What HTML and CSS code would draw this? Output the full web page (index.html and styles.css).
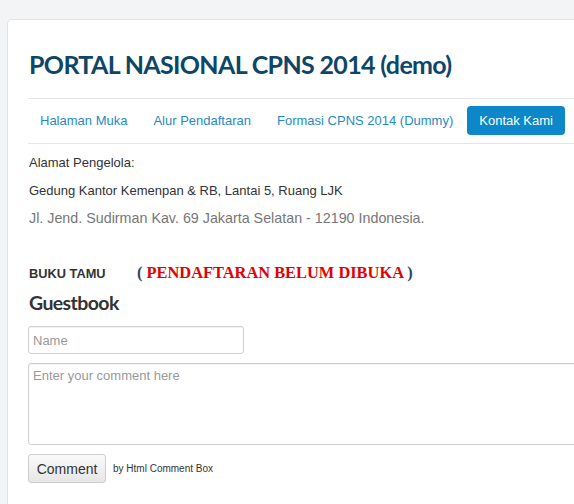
FILE: index.html
```html
<!DOCTYPE html>
<html>
<head>
<meta charset="utf-8">
<link rel="stylesheet" href="styles.css">
</head>
<body>
<div class="card">
  <h1 class="title">PORTAL NASIONAL CPNS 2014 (demo)</h1>
  <nav class="nav">
    <a class="nav-item">Halaman Muka</a>
    <a class="nav-item">Alur Pendaftaran</a>
    <a class="nav-item">Formasi CPNS 2014 (Dummy)</a>
    <a class="nav-item active">Kontak Kami</a>
  </nav>
  <div class="content">
    <p class="line">Alamat Pengelola:</p>
    <p class="line">Gedung Kantor Kemenpan &amp; RB, Lantai 5, Ruang LJK</p>
    <p class="addr">Jl. Jend. Sudirman Kav. 69 Jakarta Selatan - 12190 Indonesia.</p>
    <div class="buku">
      <span class="buku-label">BUKU TAMU</span>
      <span class="paren">( <span class="closed">PENDAFTARAN BELUM DIBUKA</span> )</span>
    </div>
    <h2 class="gb">Guestbook</h2>
    <input class="name" type="text" placeholder="Name">
    <textarea class="comment" placeholder="Enter your comment here"></textarea>
    <div class="actions">
      <button class="btn">Comment</button>
      <span class="by">by Html Comment Box</span>
    </div>
  </div>
</div>
</body>
</html>
```
FILE: styles.css
```css
html, body { margin: 0; padding: 0; overflow: hidden; }
body {
  background: #f3f4f6;
  font-family: "Liberation Sans", Arial, sans-serif;
  color: #333;
  width: 574px;
  height: 504px;
}
.card {
  margin: 19px 0 0 7px;
  width: 640px;
  height: 520px;
  background: #fff;
  border: 1px solid #e2e2e2;
  border-radius: 5px;
  box-sizing: border-box;
  padding: 0 20px;
}
.title {
  margin: 0;
  padding: 27px 0 0 1px;
  height: 51px;
  font-family: Lato, "Open Sans", sans-serif;
  font-weight: 700;
  font-size: 25px;
  line-height: 34px;
  letter-spacing: -0.65px;
  color: #0d4666;
}
.nav {
  display: flex;
  gap: 2px;
  border-top: 1px solid #e6e6e6;
  border-bottom: 1px solid #e6e6e6;
  padding: 7px 0 8px 0;
}
.nav-item {
  display: block;
  padding: 0 12px;
  height: 29px;
  line-height: 29px;
  font-size: 13px;
  color: #1f8ac6;
  border-radius: 4px;
  white-space: nowrap;
}
.nav-item.active {
  background: #0c87c9;
  color: #fff;
}
.content { padding-left: 1px; }
.line {
  margin: 0;
  font-size: 13px;
  line-height: 18px;
}
.line:first-child { margin-top: 10px; }
.line + .line { margin-top: 10px; }
.addr {
  margin: 8px 0 0 0;
  font-size: 14.3px;
  line-height: 20px;
  color: #777;
}
.buku {
  margin-top: 33px;
  height: 24px;
  display: flex;
  align-items: center;
}
.buku-label {
  font-size: 12.8px;
  font-weight: bold;
  width: 108px;
  color: #333;
}
.paren {
  font-family: "Liberation Serif", serif;
  font-weight: bold;
  font-size: 16.4px;
  color: #284a5c;
}
.closed { color: #e50000; }
.gb {
  margin: 6px 0 0 0;
  font-family: Lato, "Open Sans", sans-serif;
  font-weight: 700;
  font-size: 19.5px;
  line-height: 24px;
  letter-spacing: -0.6px;
  color: #333;
}
.name {
  display: block;
  margin: 11px 0 0 -1px;
  width: 216px;
  height: 28px;
  box-sizing: border-box;
  border: 1px solid #cfcfcf;
  border-radius: 3px;
  padding: 0 4px;
  font-family: "Liberation Sans", Arial, sans-serif;
  font-size: 13px;
  box-shadow: inset 0 1px 1px rgba(0,0,0,0.05);
}
.comment {
  display: block;
  margin: 9px 0 0 -1px;
  width: 580px;
  height: 82px;
  box-sizing: border-box;
  border: 1px solid #cfcfcf;
  border-radius: 3px;
  padding: 4px;
  font-family: "Liberation Sans", Arial, sans-serif;
  font-size: 13px;
  resize: none;
  box-shadow: inset 0 1px 1px rgba(0,0,0,0.05);
}
.name::placeholder, .comment::placeholder { color: #999; }
.actions {
  display: flex;
  align-items: center;
  margin-top: 9px;
  margin-left: -1px;
}
.btn {
  height: 29px;
  width: 78px;
  border: 1px solid #cdcdcd;
  border-radius: 3px;
  background: linear-gradient(#fafafa, #e6e6e6);
  font-family: "Liberation Sans", Arial, sans-serif;
  font-size: 14px;
  color: #333;
  padding: 0;
}
.by {
  margin-left: 7px;
  font-size: 10px;
  color: #333;
}
```
